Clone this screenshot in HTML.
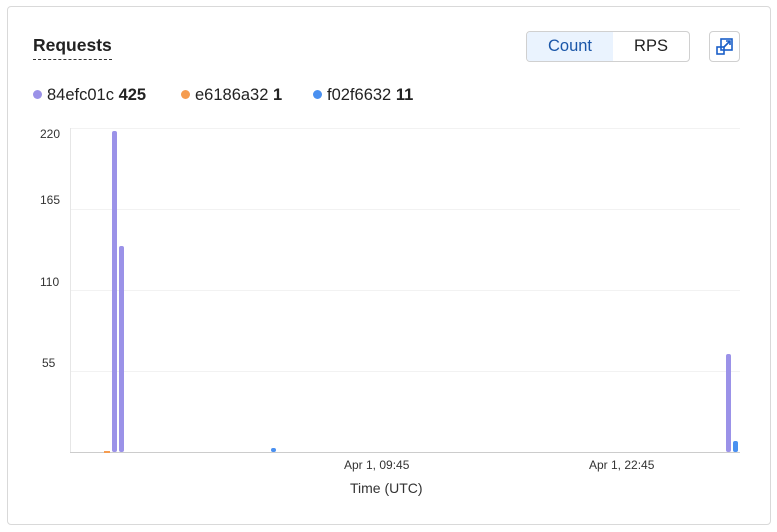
<!DOCTYPE html>
<html><head><style>
body{margin:0;background:#fff;font-family:"Liberation Sans",sans-serif;width:777px;height:532px;position:relative;overflow:hidden}
.card{position:absolute;left:7px;top:6px;width:762px;height:517px;border:1px solid #d9d9d9;border-radius:4px}
.t{position:absolute;left:33px;top:35px;font-size:17.5px;font-weight:bold;color:#222;border-bottom:1px dashed #333;padding-bottom:3px}
.seg{position:absolute;left:526px;top:31px;width:162px;height:29px;border:1px solid #d0d0d0;border-radius:4px;overflow:hidden;font-size:16.5px}
.seg div{position:absolute;top:0;height:29px;line-height:29px;text-align:center}
.ic{position:absolute;left:709px;top:31px;width:29px;height:29px;border:1px solid #d0d0d0;border-radius:4px}
.lg{position:absolute;top:86px;font-size:16.5px;color:#222}
.dot{display:inline-block;width:9px;height:9px;border-radius:50%;margin-right:5px;vertical-align:1px}
.yl{position:absolute;font-size:12px;color:#333;left:40px}
.ax{position:absolute;font-size:12px;color:#333;top:458px}
</style></head><body>
<div class="card"></div>
<div class="t">Requests</div>
<div class="seg"><div style="left:0;width:86px;background:#eaf3fe;color:#1a56a8">Count</div><div style="left:86px;width:76px;color:#222">RPS</div></div>
<div class="ic"><svg width="29" height="29" viewBox="0 0 29 29"><g fill="none" stroke="#1a5fc8" stroke-width="1.6"><rect x="11" y="7" width="11" height="11"/><rect x="7" y="15" width="7" height="7"/><path d="M14 15L20 9M16 9h4v4"/></g></svg></div>
<div class="lg" style="left:33px"><span class="dot" style="background:#9b92e8"></span>84efc01c <b>425</b></div>
<div class="lg" style="left:181px"><span class="dot" style="background:#f59c50"></span>e6186a32 <b>1</b></div>
<div class="lg" style="left:313px"><span class="dot" style="background:#4a90f0"></span>f02f6632 <b>11</b></div>
<div class="yl" style="top:127px">220</div>
<div class="yl" style="top:193px">165</div>
<div class="yl" style="top:275px">110</div>
<div class="yl" style="top:356px;left:42px">55</div>
<svg style="position:absolute;left:0;top:0" width="777" height="532">
<g stroke="#f2f2f2"><line x1="70" y1="128.5" x2="740" y2="128.5"/><line x1="70" y1="209.5" x2="740" y2="209.5"/><line x1="70" y1="290.5" x2="740" y2="290.5"/><line x1="70" y1="371.5" x2="740" y2="371.5"/></g>
<line x1="70.5" y1="128" x2="70.5" y2="452" stroke="#e6e6e6"/>
<line x1="70" y1="452.5" x2="740" y2="452.5" stroke="#ccc"/>
<g fill="#9b92e8"><rect x="112" y="131" width="5" height="321" rx="2"/><rect x="119" y="246" width="5" height="206" rx="2"/><rect x="726" y="354" width="5" height="98" rx="2"/></g>
<g fill="#4a90f0"><rect x="733" y="441" width="5" height="11" rx="2"/><rect x="271" y="448" width="5" height="4" rx="2"/></g>
<rect x="104" y="451" width="6" height="2" fill="#f59c50"/>
</svg>
<div class="ax" style="left:344px">Apr 1, 09:45</div>
<div class="ax" style="left:589px">Apr 1, 22:45</div>
<div style="position:absolute;left:350px;top:480px;font-size:14px;color:#333">Time (UTC)</div>
</body></html>
